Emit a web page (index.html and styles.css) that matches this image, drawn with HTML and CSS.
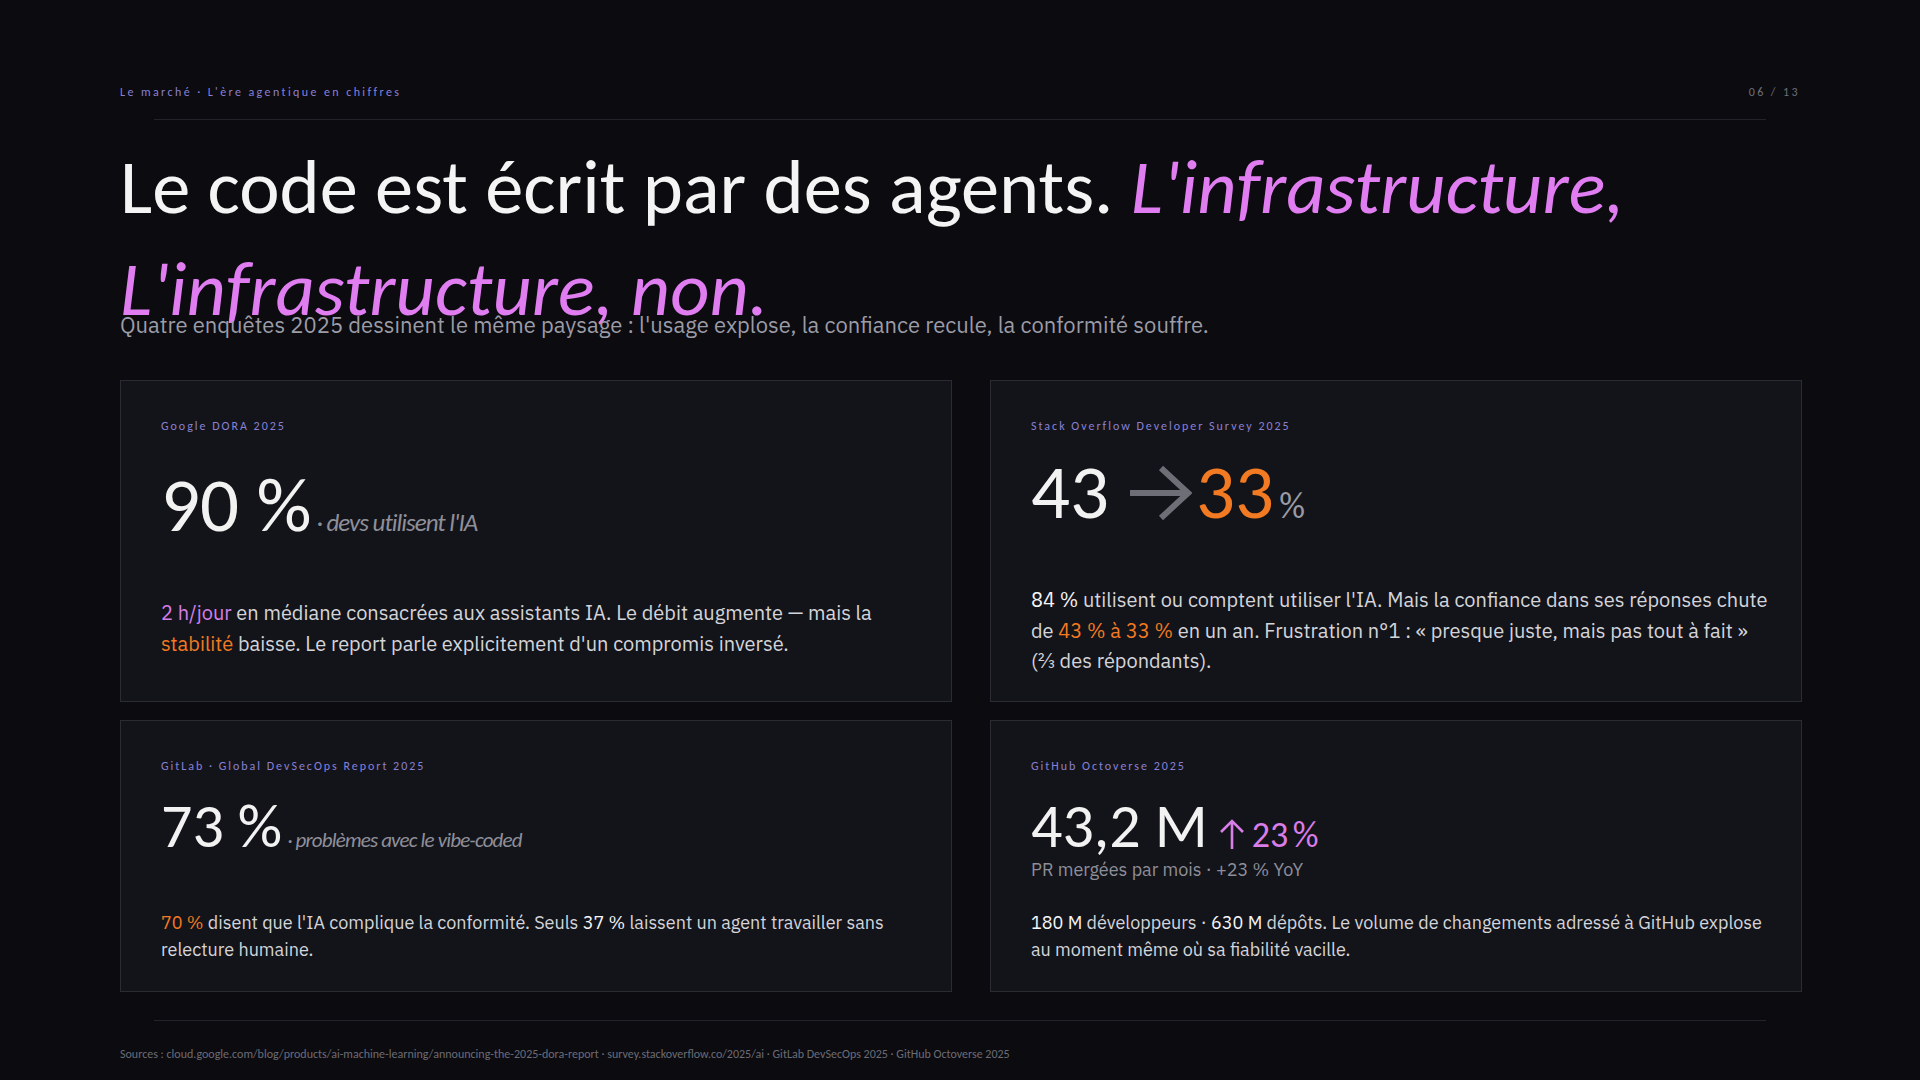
FILE: index.html
```html
<!DOCTYPE html>
<html lang="fr">
<head>
<meta charset="utf-8">
<title>Le marché · L'ère agentique en chiffres</title>
<link rel="stylesheet" href="styles.css">
</head>
<body>
<div class="slide">
  <header class="top">
    <span class="eyebrow">Le marché · L'ère agentique en chiffres</span>
    <span class="pagenum">06 / 13</span>
  </header>
  <div class="rule"></div>

  <h1 class="title">Le code est écrit par des agents. <em>L'infrastructure,</em><br><em>L'infrastructure, non.</em></h1>
  <p class="lede">Quatre enquêtes 2025 dessinent le même paysage : l'usage explose, la confiance recule, la conformité souffre.</p>

  <section class="grid">
    <article class="card row1">
      <div class="src">Google DORA 2025</div>
      <div class="body">
        <div class="metric"><span class="num">90 %</span><span class="suffix">· devs utilisent l'IA</span></div>
        <p class="para"><span class="pink">2 h/jour</span> en médiane consacrées aux assistants IA. Le débit augmente — mais la<br><span class="orange">stabilité</span> baisse. Le report parle explicitement d'un compromis inversé.</p>
      </div>
    </article>

    <article class="card row1">
      <div class="src">Stack Overflow Developer Survey 2025</div>
      <div class="body">
        <div class="metric"><span class="num">43</span><svg class="arrow-right" viewBox="0 0 64 56" aria-hidden="true"><path d="M2 28 H59 M33 3 L60 28 L33 53" fill="none" stroke="#6e6e76" stroke-width="6" stroke-linejoin="miter"/></svg><span class="num orange">33</span><span class="pct">%</span></div>
        <p class="para"><strong>84 %</strong> utilisent ou comptent utiliser l'IA. Mais la confiance dans ses réponses chute<br>de <span class="orange">43 % à 33 %</span> en un an. Frustration n°1 : « presque juste, mais pas tout à fait »<br>(⅔ des répondants).</p>
      </div>
    </article>

    <article class="card row2">
      <div class="src">GitLab · Global DevSecOps Report 2025</div>
      <div class="body">
        <div class="metric"><span class="num">73 %</span><span class="suffix">· problèmes avec le vibe-coded</span></div>
        <p class="para"><span class="orange">70 %</span> disent que l'IA complique la conformité. Seuls <strong>37 %</strong> laissent un agent travailler sans<br>relecture humaine.</p>
      </div>
    </article>

    <article class="card row2">
      <div class="src">GitHub Octoverse 2025</div>
      <div class="body">
        <div class="metric"><span class="num">43,2 M</span><svg class="arrow-up" viewBox="0 0 26 32" aria-hidden="true"><path d="M13 31 V3 M2 14 L13 3 L24 14" fill="none" stroke="#d97de8" stroke-width="2.6"/></svg><span class="delta">23 %</span>
          <div class="sub">PR mergées par mois · +23 % YoY</div>
        </div>
        <p class="para"><strong>180 M</strong> développeurs · <strong>630 M</strong> dépôts. Le volume de changements adressé à GitHub explose<br>au moment même où sa fiabilité vacille.</p>
      </div>
    </article>
  </section>

  <div class="rule rule-bottom"></div>
  <footer class="sources">Sources : cloud.google.com/blog/products/ai-machine-learning/announcing-the-2025-dora-report · survey.stackoverflow.co/2025/ai · GitLab DevSecOps 2025 · GitHub Octoverse 2025</footer>
</div>
</body>
</html>
```

FILE: styles.css
```css
html, body {
  margin: 0;
  padding: 0;
  background: #0b0b10;
}

body {
  font-family: "Carlito", "Calibri", "Lato", sans-serif;
  color: #f2f2f4;
}

.slide {
  width: 1920px;
  height: 1080px;
  box-sizing: border-box;
  padding: 85px 120px 0;
  display: flex;
  flex-direction: column;
  overflow: hidden;
}

.top {
  display: flex;
  justify-content: space-between;
  align-items: center;
  font-size: 12px;
  line-height: 15px;
  letter-spacing: 0.2em;
}

.eyebrow {
  color: #8a80d6;
}

.pagenum {
  color: #6f6f79;
}

.rule {
  height: 1px;
  margin: 19px 34px 0;
  background: #23242b;
  flex: none;
}

.title {
  margin: 16px 0 0;
  height: 174px;
  font-size: 76.5px;
  line-height: 102px;
  font-weight: 400;
  color: #f4f4f4;
  white-space: nowrap;
}

.title em {
  color: #e07df0;
  font-style: italic;
}

.lede {
  margin: 0;
  font-family: "IBM Plex Sans", "Roboto", sans-serif;
  font-size: 22px;
  line-height: 29px;
  color: #9c9ca7;
}

.grid {
  margin-top: 41px;
  display: grid;
  grid-template-columns: 832px 812px;
  grid-template-rows: 322px 272px;
  gap: 18px 38px;
}

.card {
  display: flex;
  flex-direction: column;
  min-width: 0;
  box-sizing: border-box;
  padding: 38px 40px 29px;
  background: #131419;
  border: 1px solid #2b2c33;
}

.row2.card {
  padding-bottom: 27px;
}

.src {
  font-size: 12px;
  line-height: 15px;
  letter-spacing: 0.165em;
  color: #8a80d6;
  margin-bottom: 20px;
}

.body {
  margin: auto 0;
}

.metric {
  white-space: nowrap;
  line-height: 1;
}

.num {
  color: #f2f2f2;
}

.row1 .metric {
  font-size: 77px;
  height: 77px;
}

.row2 .metric {
  font-size: 62px;
  height: 84px;
}

.suffix {
  font-style: italic;
  color: #8f8f9a;
  letter-spacing: -0.04em;
  margin-left: 5px;
}

.row1 .suffix {
  font-size: 25px;
}

.row2 .suffix {
  font-size: 21px;
}

.arrow-right {
  width: 64px;
  height: 56px;
  margin: 0 4px 0 19px;
  vertical-align: -3px;
}

.orange {
  color: #f27a22;
}

.pink {
  color: #d57ee6;
}

.pct {
  font-size: 36px;
  color: #9a9aa5;
  margin-left: 5px;
}

.arrow-up {
  width: 26px;
  height: 32px;
  margin: 0 7px 0 11px;
  vertical-align: -3px;
}

.delta {
  font-size: 36px;
  color: #d97de8;
  word-spacing: -0.1em;
}

.sub {
  margin-top: 2px;
  font-family: "IBM Plex Sans", "Roboto", sans-serif;
  font-size: 18px;
  line-height: 22px;
  color: #8e8e99;
}

.para {
  margin: 0;
  font-family: "IBM Plex Sans", "Roboto", sans-serif;
  color: #d4d4da;
  white-space: nowrap;
}

.para strong {
  font-weight: 400;
  color: #f6f6f8;
}

.row1 .para {
  margin-top: 54px;
  font-size: 20px;
  line-height: 30.6px;
}

.row2 .para {
  margin-top: 30px;
  font-size: 18px;
  line-height: 27px;
}

.rule-bottom {
  margin-top: 28px;
}

.sources {
  margin-top: 26px;
  font-size: 12px;
  line-height: 15px;
  color: #6c6c76;
}
```
